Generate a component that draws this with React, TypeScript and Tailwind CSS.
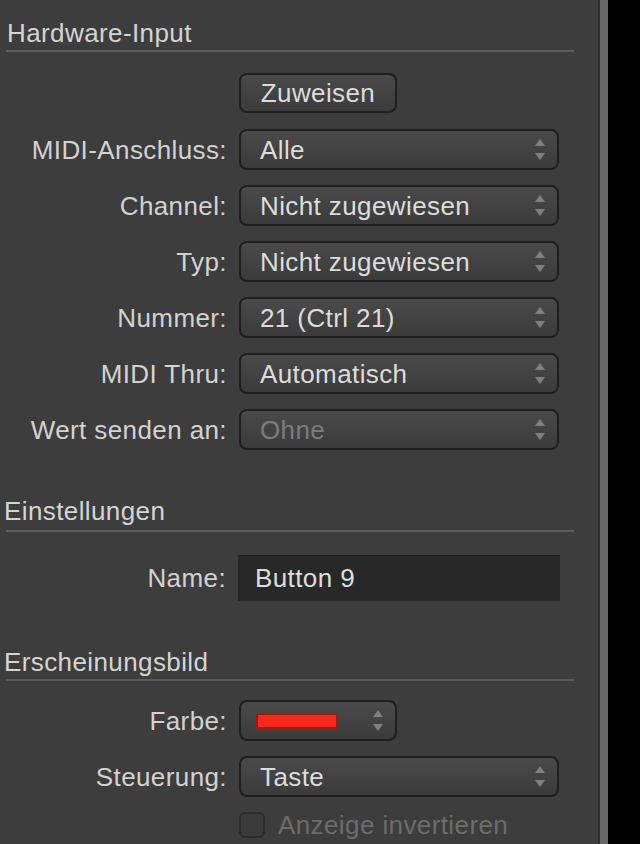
import React from "react";

const font = { fontFamily: '"Liberation Sans", Arial, sans-serif' };

function Arrows() {
  return (
    <svg width="12" height="22" viewBox="0 0 12 22" className="shrink-0">
      <polygon points="6,0 11,7 1,7" fill="#808080" />
      <polygon points="1,14 11,14 6,21" fill="#808080" />
    </svg>
  );
}

function Popup({ value, disabled }: { value: string; disabled?: boolean }) {
  return (
    <div className="flex h-[41px] w-[320px] items-center justify-between rounded-[8px] border-2 border-[#1f1f1f] bg-gradient-to-b from-[#4a4a4a] to-[#3b3b3b] pl-[19px] pr-[11px]">
      <span className={disabled ? "text-[#7c7c7c]" : "text-[#dcdcdc]"}>{value}</span>
      <Arrows />
    </div>
  );
}

function Row({ label, children }: { label: string; children: React.ReactNode }) {
  return (
    <div className="flex h-[41px] items-center">
      <div className="w-[228px] shrink-0 pr-[1px] text-right text-[#d2d2d2]">{label}</div>
      <div className="ml-[11px]">{children}</div>
    </div>
  );
}

function Header({ title, pl }: { title: string; pl: string }) {
  return <div className={`${pl} leading-[26px] text-[#d4d4d4]`}>{title}</div>;
}

export default function App() {
  return (
    <div
      className="flex h-[844px] w-[640px] overflow-hidden bg-black text-[26px] leading-[28px] tracking-[0.4px]"
      style={font}
    >
      <div className="w-[598px] shrink-0 bg-[#3d3d3d]">
        <div className="pt-[20px]">
          <Header title="Hardware-Input" pl="pl-[7px]" />
          <div className="ml-[6px] mt-[4px] h-[2px] w-[568px] bg-[#5a5a5a]" />
          <div className="mt-[21px] flex flex-col gap-[15px]">
            <div className="flex h-[41px] items-start">
              <div className="ml-[239px] flex h-[40px] w-[158px] items-center justify-center rounded-[8px] border-2 border-[#1f1f1f] bg-gradient-to-b from-[#4a4a4a] to-[#3b3b3b] text-[#dcdcdc]">
                Zuweisen
              </div>
            </div>
            <Row label="MIDI-Anschluss:">
              <Popup value="Alle" />
            </Row>
            <Row label="Channel:">
              <Popup value="Nicht zugewiesen" />
            </Row>
            <Row label="Typ:">
              <Popup value="Nicht zugewiesen" />
            </Row>
            <Row label="Nummer:">
              <Popup value="21 (Ctrl 21)" />
            </Row>
            <Row label="MIDI Thru:">
              <Popup value="Automatisch" />
            </Row>
            <Row label="Wert senden an:">
              <Popup value="Ohne" disabled />
            </Row>
          </div>

          <div className="mt-[48px]">
            <Header title="Einstellungen" pl="pl-[4px]" />
          </div>
          <div className="ml-[6px] mt-[6px] h-[2px] w-[568px] bg-[#5a5a5a]" />
          <div className="mt-[23px] flex h-[46px] items-center">
            <div className="w-[226px] shrink-0 text-right text-[#d2d2d2]">Name:</div>
            <div className="ml-[12px] flex h-[46px] w-[322px] items-center bg-[#282828] pl-[17px] text-[#dedede] shadow-[inset_0_1px_0_#1c1c1c]">
              Button 9
            </div>
          </div>

          <div className="mt-[48px]">
            <Header title="Erscheinungsbild" pl="pl-[4px]" />
          </div>
          <div className="ml-[6px] mt-[4px] h-[2px] w-[568px] bg-[#5a5a5a]" />
          <div className="mt-[19px] flex flex-col gap-[15px]">
            <Row label="Farbe:">
              <div className="flex h-[41px] w-[158px] items-center justify-between rounded-[8px] border-2 border-[#1f1f1f] bg-gradient-to-b from-[#4a4a4a] to-[#3b3b3b] pl-[15px] pr-[11px]">
                <div className="h-[16px] w-[82px] border-2 border-[#9c1a10] bg-[#f52a1e]" />
                <Arrows />
              </div>
            </Row>
            <Row label="Steuerung:">
              <Popup value="Taste" />
            </Row>
          </div>
          <div className="mt-[15px] flex h-[26px] items-center">
            <div className="ml-[239px] h-[26px] w-[26px] shrink-0 rounded-[6px] border-2 border-[#2c2c2c] bg-[#3a3a3a]" />
            <div className="ml-[13px] whitespace-nowrap text-[#6c6c6c]">Anzeige invertieren</div>
          </div>
        </div>
      </div>
      <div className="w-[2px] shrink-0 bg-[#2e2e2e]" />
      <div className="w-[8px] shrink-0 bg-[#676767]" />
      <div className="flex-1 bg-black" />
    </div>
  );
}
